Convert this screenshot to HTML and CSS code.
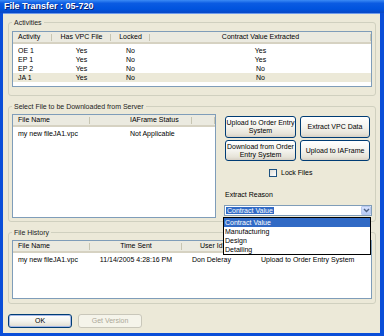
FILE: index.html
```html
<!DOCTYPE html>
<html>
<head>
<meta charset="utf-8">
<link rel="stylesheet" href="styles.css">
</head>
<body>
<div class="window">
  <div class="titlebar"><span class="title">File Transfer : 05-720</span></div>
  <div class="client">
    <fieldset class="group g1">
      <legend>Activities</legend>
      <div class="lv lv-act">
        <div class="lv-head"><span class="l">Activity</span><span>Has VPC File</span><span>Locked</span><span>Contract Value Extracted</span></div>
        <div class="lv-body">
          <div class="lv-row"><span class="l">OE 1</span><span>Yes</span><span>No</span><span>Yes</span></div>
          <div class="lv-row"><span class="l">EP 1</span><span>Yes</span><span>No</span><span>Yes</span></div>
          <div class="lv-row"><span class="l">EP 2</span><span>Yes</span><span>No</span><span>No</span></div>
          <div class="lv-row sel"><span class="l">JA 1</span><span>Yes</span><span>No</span><span>No</span></div>
        </div>
      </div>
    </fieldset>

    <fieldset class="group g2">
      <legend>Select File to be Downloaded from Server</legend>
      <div class="g2-inner">
        <div class="lv lv-sel">
          <div class="lv-head"><span class="l">File Name</span><span class="l2">IAFrame Status</span><span></span></div>
          <div class="lv-body">
            <div class="lv-row"><span class="l">my new fileJA1.vpc</span><span class="l2">Not Applicable</span><span></span></div>
          </div>
        </div>
        <div class="side">
          <div class="btn-grid">
            <button class="btn">Upload to Order Entry<br>System</button>
            <button class="btn">Extract VPC Data</button>
            <button class="btn">Download from Order<br>Entry System</button>
            <button class="btn">Upload to IAFrame</button>
          </div>
          <label class="check"><span class="box"></span><span>Lock Files</span></label>
          <div class="reason-label">Extract Reason</div>
          <div class="combo">
            <span class="combo-text"><span class="hi">Contract Value</span></span>
            <span class="combo-btn"><svg width="7" height="5" viewBox="0 0 7 5"><polyline points="1,1 3.5,3.5 6,1" fill="none" stroke="#4D6185" stroke-width="1.4"/></svg></span>
            <div class="droplist">
              <div class="opt on">Contract Value</div>
              <div class="opt">Manufacturing</div>
              <div class="opt">Design</div>
              <div class="opt">Detailing</div>
            </div>
          </div>
        </div>
      </div>
    </fieldset>

    <fieldset class="group g3">
      <legend>File History</legend>
      <div class="lv lv-hist">
        <div class="lv-head"><span class="l">File Name</span><span>Time Sent</span><span class="l3">User Id</span><span></span></div>
        <div class="lv-body">
          <div class="lv-row"><span class="l">my new fileJA1.vpc</span><span>11/14/2005 4:28:16 PM</span><span class="l4">Don Deleray</span><span class="l5">Upload to Order Entry System</span></div>
        </div>
      </div>
    </fieldset>

    <div class="footer">
      <button class="btn btn-default">OK</button>
      <button class="btn btn-disabled">Get Version</button>
    </div>
  </div>
</div>
</body>
</html>
```

FILE: styles.css
```css
* { box-sizing: border-box; }
html, body { margin: 0; padding: 0; }
body {
  width: 384px;
  height: 336px;
  overflow: hidden;
  font-family: "Liberation Sans", Arial, sans-serif;
  font-size: 7px;
  color: #000;
}
.window {
  width: 384px;
  height: 336px;
  background: #0A4ED8;
  display: flex;
  flex-direction: column;
  padding: 0 4px 3px 3px;
}
.titlebar {
  height: 13px;
  margin: 0 -4px 0 -3px;
  background: linear-gradient(to bottom, #3C8BF5 0%, #0B5BE2 25%, #0053DE 70%, #0A48C4 100%);
  display: flex;
  align-items: center;
  padding-left: 4px;
}
.title {
  color: #fff;
  font-weight: bold;
  font-size: 9px;
  line-height: 11px;
  text-shadow: 1px 1px 0 #0A1E6A;
}
.client {
  flex: 1;
  background: #ECE9D8;
  display: flex;
  flex-direction: column;
  padding: 4px 4px 0 5px;
  border-top: 1px solid #6E9AEB;
}
.group {
  margin: 0;
  border: 1px solid #D0D0BF;
  border-radius: 3px;
  padding: 4px 3px 8px 3px;
  min-width: 0;
}
.group legend {
  padding: 0 2px;
  margin-left: 0;
  line-height: 9px;
  color: #222;
}
.g2 { margin-top: 6px; padding: 3px 3px 3px 3px; }
.g3 { margin-top: 6px; padding: 3px 3px 4px 3px; }

.lv {
  border: 1px solid #7F9DB9;
  background: #fff;
  overflow: hidden;
}
.lv-head {
  display: grid;
  height: 12px;
  background: #EBEAE0;
  border-bottom: 2px solid #D6D2C2;
  line-height: 10px;
}
.lv-head > span {
  text-align: center;
  background: linear-gradient(#C7C5B2, #C7C5B2) right 2px / 1px 7px no-repeat;
  white-space: nowrap;
}
.lv-body { padding-top: 2px; }
.lv-row {
  display: grid;
  height: 9px;
  line-height: 9px;
}
.lv-row > span { text-align: center; white-space: nowrap; }
.lv .l { text-align: left; padding-left: 5px; }
.lv-row.sel { background: #ECE9D8; }

.lv-act { height: 56px; }
.lv-act .lv-head, .lv-act .lv-row { grid-template-columns: 39px 59px 39px 1fr; }

.g2-inner { display: flex; align-items: flex-start; }
.lv-sel { width: 204px; height: 104px; flex: none; }
.lv-sel .lv-head, .lv-sel .lv-row { grid-template-columns: 77px 102px 1fr; }
.lv-sel .l2 { text-align: left; padding-left: 40px; }

.side {
  margin-left: 8px;
  padding-top: 2px;
  display: flex;
  flex-direction: column;
  width: 148px;
}
.btn-grid {
  display: grid;
  grid-template-columns: 71px 70px;
  grid-template-rows: 22px 21px;
  column-gap: 4px;
  row-gap: 2px;
  margin-left: 1px;
}
.btn {
  font-family: "Liberation Sans", Arial, sans-serif;
  font-size: 7px;
  line-height: 8px;
  color: #000;
  border: 1px solid #003C74;
  border-radius: 3px;
  background: linear-gradient(to bottom, #FFFFFF 0%, #F4F3EE 50%, #E6E3D8 85%, #D6D0C5 100%);
  padding: 0;
  margin: 0;
  text-align: center;
  white-space: nowrap;
}
.check {
  display: flex;
  align-items: center;
  margin-top: 7px;
  margin-left: 45px;
  height: 9px;
  line-height: 9px;
}
.box {
  width: 8px;
  height: 8px;
  border: 1px solid #1C5180;
  background: linear-gradient(135deg, #DCDCD7, #FFFFFF);
  margin-right: 4px;
}
.reason-label {
  margin-top: 13px;
  line-height: 9px;
  padding-left: 1px;
}
.combo {
  position: relative;
  margin-top: 6px;
  height: 11px;
  width: 148px;
  border: 1px solid #7F9DB9;
  background: #fff;
  display: flex;
  align-items: center;
  justify-content: space-between;
}
.combo-text { padding-left: 1px; line-height: 9px; }
.hi { background: #316AC5; color: #fff; padding: 0 1px; }
.combo-btn {
  width: 10px;
  height: 9px;
  background: linear-gradient(to bottom, #D6E2FD, #B5C9F6);
  border: 1px solid #BAC9EE;
  border-radius: 1px;
  display: flex;
  align-items: center;
  justify-content: center;
}
.droplist {
  position: absolute;
  left: -2px;
  top: 11px;
  width: 148px;
  border: 1px solid #000;
  background: #fff;
  z-index: 5;
}
.opt {
  height: 9px;
  line-height: 9px;
  padding-left: 1px;
}
.opt.on { background: #316AC5; color: #fff; }

.lv-hist { height: 59px; }
.lv-hist .lv-head, .lv-hist .lv-row { grid-template-columns: 77px 92px 73px 1fr; }
.lv-hist .l3 { text-align: left; padding-left: 18px; }
.lv-hist .l4 { text-align: left; padding-left: 10px; }
.lv-hist .l5 { text-align: left; padding-left: 6px; }

.footer {
  display: flex;
  gap: 6px;
  margin-top: 10px;
}
.footer .btn { width: 64px; height: 14px; line-height: 12px; }
.btn-default { box-shadow: inset 0 0 0 1px #A6B8E6; }
.btn-disabled {
  border-color: #C9C7BA;
  background: #F5F4EA;
  color: #ACA899;
}
```
